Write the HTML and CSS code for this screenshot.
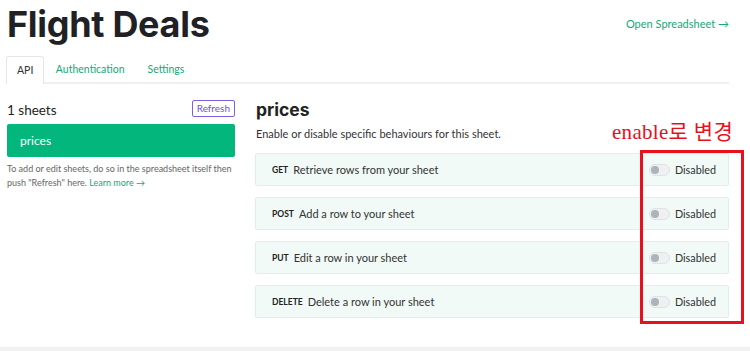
FILE: index.html
```html
<!DOCTYPE html>
<html lang="en">
  <head>
    <meta charset="UTF-8" />
    <meta name="viewport" content="width=device-width, initial-scale=1.0" />
    <title>Flight Deals</title>
    <link rel="stylesheet" href="styles.css">
  </head>
  <body>
    <div class="page">
      <div class="header">
        <h1>Flight Deals</h1>
        <a class="open-link" href="#">Open Spreadsheet &rarr;</a>
      </div>

      <ul class="tabs">
        <li class="tab active">API</li>
        <li class="tab">Authentication</li>
        <li class="tab">Settings</li>
      </ul>

      <div class="main">
        <div class="sidebar">
          <div class="sheets-head">
            <span class="sheets-count">1 sheets</span>
            <button class="refresh">Refresh</button>
          </div>
          <div class="sheet-item">prices</div>
          <p class="help">To add or edit sheets, do so in the spreadsheet itself then push "Refresh" here. <a href="#">Learn more &rarr;</a></p>
        </div>

        <div class="content">
          <h2>prices</h2>
          <p class="lead">Enable or disable specific behaviours for this sheet.</p>

          <div class="method">
            <span class="verb">GET</span>
            <span class="desc">Retrieve rows from your sheet</span>
            <span class="toggle"><span class="switch"></span>Disabled</span>
          </div>
          <div class="method">
            <span class="verb">POST</span>
            <span class="desc">Add a row to your sheet</span>
            <span class="toggle"><span class="switch"></span>Disabled</span>
          </div>
          <div class="method">
            <span class="verb">PUT</span>
            <span class="desc">Edit a row in your sheet</span>
            <span class="toggle"><span class="switch"></span>Disabled</span>
          </div>
          <div class="method">
            <span class="verb">DELETE</span>
            <span class="desc">Delete a row in your sheet</span>
            <span class="toggle"><span class="switch"></span>Disabled</span>
          </div>
        </div>
      </div>
    </div>

    <!-- annotation drawn over the screenshot -->
    <div class="note">enable로 변경</div>
    <div class="note-box"></div>

    <div class="footer-bar"></div>
  </body>
</html>
```

FILE: styles.css
```css
/* Global Styles */
body {
  margin: 0;
  font-family: Lato, "Noto Sans", sans-serif;
  color: #222;
  background: #fff;
  height: 351px;
  overflow: hidden;
  position: relative;
}

.page {
  width: 723px;
  margin-left: 6px;
}

/* Header */
.header {
  display: flex;
  justify-content: space-between;
  align-items: flex-start;
  height: 56px;
}

h1 {
  font-family: Inter, sans-serif;
  font-size: 36px;
  font-weight: 700;
  letter-spacing: -0.3px;
  color: #1f2124;
  margin: 1px 0 0 1px;
  line-height: 46px;
}

.open-link {
  color: #16a878;
  text-decoration: none;
  font-size: 11px;
  margin-top: 17px;
}

/* Tabs */
.tabs {
  list-style: none;
  margin: 0;
  padding: 0;
  display: flex;
  border-bottom: 2px solid #eef0f1;
  height: 26px;
}

.tab {
  font-size: 10.5px;
  color: #16a878;
  padding: 0 11.5px;
  line-height: 27px;
}

.tab.active {
  color: #333;
  border: 1px solid #e4e7ea;
  border-bottom: none;
  border-radius: 3px 3px 0 0;
  background: #fff;
  margin-bottom: -2px;
  height: 27px;
  line-height: 26px;
  padding: 0 10px;
}

/* Main layout */
.main {
  display: grid;
  grid-template-columns: 228px 1fr;
  gap: 20px;
  margin-top: 14px;
  padding-left: 1px;
}

/* Sidebar */
.sheets-head {
  display: flex;
  justify-content: space-between;
  align-items: center;
  height: 20px;
  margin-bottom: 6px;
}

.sheets-count {
  font-size: 13.5px;
  color: #222;
  margin-top: 3px;
}

.refresh {
  font-family: Lato, sans-serif;
  font-size: 10px;
  color: #6c54d9;
  background: #fff;
  border: 1px solid #7b61e0;
  border-radius: 2px;
  padding: 0 4px;
  height: 17px;
  line-height: 15px;
}

.sheet-item {
  background: #03b67b;
  color: #fff;
  border-radius: 2px;
  height: 33px;
  line-height: 33px;
  padding-left: 13px;
  font-size: 12px;
}

.help {
  font-size: 9px;
  line-height: 14px;
  color: #666;
  margin: 5px 0 0;
}

.help a {
  color: #16a878;
  text-decoration: none;
}

/* Content */
.content h2 {
  font-family: Inter, sans-serif;
  font-size: 17.5px;
  font-weight: 700;
  margin: 0;
  line-height: 26px;
  padding-left: 1px;
  margin-top: -1px;
}

.lead {
  font-size: 11px;
  color: #333;
  margin: 3px 0 12px 1px;
  line-height: 15px;
}

.method {
  display: flex;
  align-items: center;
  height: 31px;
  background: #f1faf7;
  border: 1px solid #d9f3e9;
  border-radius: 2px;
  padding: 0 12px 0 16px;
  margin-bottom: 11px;
}

.verb {
  font-size: 8.5px;
  font-weight: 700;
  color: #222;
  margin-right: 5px;
}

.desc {
  font-size: 11px;
  color: #333;
  flex: 1;
}

.toggle {
  display: flex;
  align-items: center;
  font-size: 10.8px;
  color: #333;
}

.switch {
  width: 19px;
  height: 10px;
  border-radius: 6px;
  background: #eef0f2;
  border: 1px solid #dfe2e5;
  margin-right: 5px;
  position: relative;
}

.switch::before {
  content: "";
  position: absolute;
  left: 1px;
  top: 1px;
  width: 8px;
  height: 8px;
  border-radius: 50%;
  background: #aeb3ba;
}

/* Annotation */
.note {
  position: absolute;
  left: 612px;
  top: 115px;
  font-family: "Liberation Serif", "Noto Sans CJK KR", serif;
  font-size: 21px;
  letter-spacing: 0.3px;
  color: #e8101c;
}

.note-box {
  position: absolute;
  left: 640px;
  top: 150px;
  width: 98px;
  height: 168px;
  border: 3px solid #e8101c;
}

.footer-bar {
  position: absolute;
  left: 0;
  right: 0;
  bottom: 0;
  height: 4px;
  background: #f0f1f2;
}
```
